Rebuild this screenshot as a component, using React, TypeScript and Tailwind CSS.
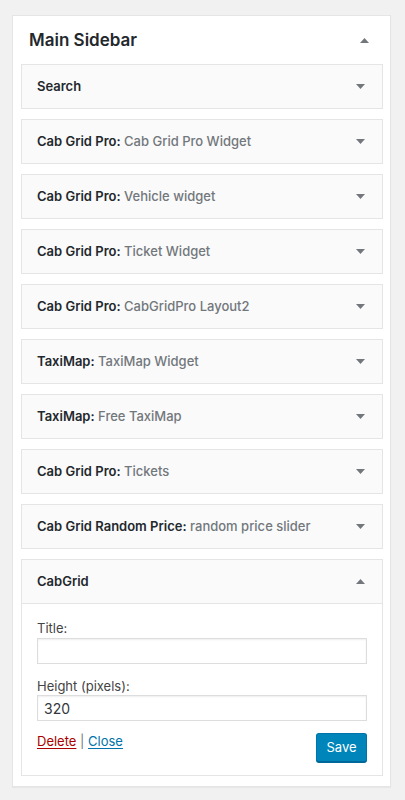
import React from "react";

const Down = () => (
  <svg width="9" height="5" viewBox="0 0 9 5" className="block">
    <polygon points="0,0 9,0 4.5,5" fill="#72777c" />
  </svg>
);
const Up = () => (
  <svg width="9" height="5" viewBox="0 0 9 5" className="block">
    <polygon points="0,5 9,5 4.5,0" fill="#72777c" />
  </svg>
);

const widgets: [string, string | null][] = [
  ["Search", null],
  ["Cab Grid Pro", "Cab Grid Pro Widget"],
  ["Cab Grid Pro", "Vehicle widget"],
  ["Cab Grid Pro", "Ticket Widget"],
  ["Cab Grid Pro", "CabGridPro Layout2"],
  ["TaxiMap", "TaxiMap Widget"],
  ["TaxiMap", "Free TaxiMap"],
  ["Cab Grid Pro", "Tickets"],
  ["Cab Grid Random Price", "random price slider"],
];

export default function App() {
  return (
    <div
      className="min-h-[800px] bg-[#f1f1f1] pl-3 pt-[15px]"
      style={{ fontFamily: "Inter, 'Liberation Sans', sans-serif" }}
    >
      <div className="w-[379px] border border-[#e5e5e5] bg-white pl-2 pr-[7px] pb-[10px] shadow-[0_1px_1px_rgba(0,0,0,0.04)]">
        <div className="flex h-[48px] items-center justify-between pl-2 pr-[14px] pt-[1px]">
          <span className="text-[17px] font-semibold text-[#23282d]">Main Sidebar</span>
          <Up />
        </div>
        <div className="flex flex-col gap-[10px]">
          {widgets.map(([a, b], i) => (
            <div
              key={i}
              className="flex h-[45px] items-center justify-between border border-[#e5e5e5] bg-[#fafafa] pl-[15px] pr-[17px]"
            >
              <span className="text-[13px] font-semibold text-[#23282d]">
                {b ? `${a}:` : a}
                {b && <span className="font-medium text-[#72777c]"> {b}</span>}
              </span>
              <Down />
            </div>
          ))}
          <div className="border border-[#e5e5e5] bg-white">
            <div className="flex h-[44px] items-center justify-between border-b border-[#e5e5e5] bg-[#fafafa] pl-[15px] pr-[17px]">
              <span className="text-[13px] font-semibold text-[#23282d]">CabGrid</span>
              <Up />
            </div>
            <div className="px-[15px] pt-[15px] pb-[13px] text-[13px] text-[#444]">
              <div className="leading-[18px]">Title:</div>
              <div className="mt-px h-[26px] border border-[#ddd] shadow-[inset_0_1px_2px_rgba(0,0,0,0.07)]" />
              <div className="mt-[13px] leading-[18px]">Height (pixels):</div>
              <div className="flex h-[26px] items-center border border-[#ddd] px-[6px] text-[14px] text-[#32373c] shadow-[inset_0_1px_2px_rgba(0,0,0,0.07)]">
                320
              </div>
              <div className="mt-[12px] flex items-start justify-between">
                <div className="-mt-px leading-[18px]">
                  <span className="text-[#a00] underline underline-offset-2">Delete</span>
                  <span className="text-[#72777c]"> | </span>
                  <span className="text-[#0073aa] underline underline-offset-2">Close</span>
                </div>
                <button className="h-[29px] w-[51px] rounded-[3px] border border-[#0073aa] border-b-[#006799] bg-[#0085ba] text-[13px] text-white shadow-[0_1px_0_#006799]">
                  Save
                </button>
              </div>
            </div>
          </div>
        </div>
      </div>
    </div>
  );
}
